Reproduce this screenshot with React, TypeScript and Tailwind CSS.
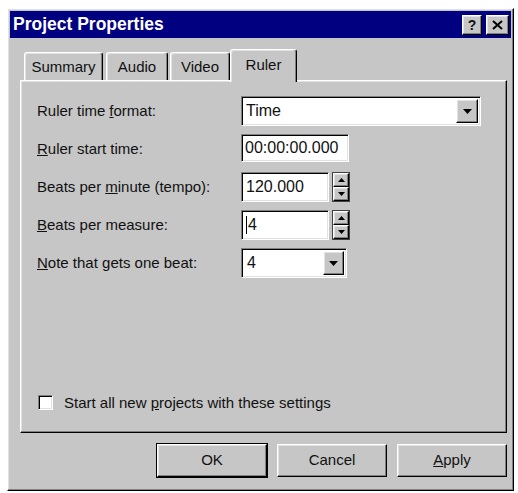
import React from "react";

const raised =
  "border border-t-white border-l-white border-r-black border-b-black shadow-[inset_-1px_-1px_#808080,inset_1px_1px_#e2e2e2]";
const sunken =
  "border border-t-[#808080] border-l-[#808080] border-r-white border-b-white shadow-[inset_1px_1px_#000,inset_-1px_-1px_#e2e2e2]";

function DownArrow() {
  return (
    <svg width="9" height="5" viewBox="0 0 9 5">
      <path d="M0 0h9L4.5 5z" fill="#000" />
    </svg>
  );
}

function DropButton({ w }: { w: string }) {
  return (
    <div className={`${raised} ${w} h-full flex items-center justify-center bg-[#c6c6c6]`}>
      <DownArrow />
    </div>
  );
}

function Spinner() {
  return (
    <div className="ml-[3px] flex h-[30px] w-[18px] flex-col border border-[#404040]">
      <div className={`${raised} flex flex-1 items-center justify-center bg-[#c6c6c6]`}>
        <svg width="7" height="4" viewBox="0 0 7 4">
          <path d="M0 4h7L3.5 0z" fill="#000" />
        </svg>
      </div>
      <div className={`${raised} flex flex-1 items-center justify-center bg-[#c6c6c6]`}>
        <svg width="7" height="4" viewBox="0 0 7 4">
          <path d="M0 0h7L3.5 4z" fill="#000" />
        </svg>
      </div>
    </div>
  );
}

function Tab({ label, active, w }: { label: string; active?: boolean; w: string }) {
  if (active) {
    return (
      <div
        className={`${w} relative z-10 -mx-[2px] -mb-[2px] flex h-[33px] items-start justify-center rounded-t-[3px] border border-b-0 border-t-white border-l-white border-r-black bg-[#c6c6c6] pt-[4px] shadow-[inset_-1px_0_#808080,inset_1px_1px_#e2e2e2]`}
      >
        {label}
      </div>
    );
  }
  return (
    <div
      className={`${w} flex h-[28px] items-center justify-center rounded-t-[3px] border border-b-0 border-t-white border-l-white border-r-black bg-[#c6c6c6] pt-[2px] shadow-[inset_-1px_0_#808080,inset_1px_1px_#e2e2e2]`}
    >
      {label}
    </div>
  );
}

function Button({ children, def }: { children: React.ReactNode; def?: boolean }) {
  return (
    <div
      className={`${def ? "outline outline-1 outline-black" : ""} ${raised} flex h-[33px] w-[110px] items-center justify-center bg-[#c6c6c6] text-[15px]`}
    >
      {children}
    </div>
  );
}

export default function App() {
  return (
    <div
      className="min-h-[493px] bg-white pl-[7px] pt-[8px] text-[#111]"
      style={{ fontFamily: '"Liberation Sans", Arial, sans-serif' }}
    >
      <div className={`${raised} flex h-[483px] w-[507px] flex-col bg-[#c6c6c6] p-[2px]`}>
        {/* Title bar */}
        <div className="flex h-[27px] items-center justify-between bg-[#000080] pl-[3px] pr-[2px]">
          <span className="text-[17.5px] font-bold text-white">Project Properties</span>
          <div className="flex gap-[4px]">
            <div className={`${raised} flex h-[20px] w-[20px] items-center justify-center bg-[#c6c6c6] text-[14px] font-bold leading-none`}>
              ?
            </div>
            <div className={`${raised} flex h-[20px] w-[23px] items-center justify-center bg-[#c6c6c6]`}>
              <svg width="11" height="10" viewBox="0 0 11 10">
                <path d="M1 1l9 8M10 1l-9 8" stroke="#000" strokeWidth="2" />
              </svg>
            </div>
          </div>
        </div>

        <div className="flex flex-1 flex-col pl-[10px] pr-[4px]">
          {/* Tabs */}
          <div className="mt-[11px] flex h-[31px] items-end pl-[4px] text-[15px]">
            <Tab label="Summary" w="w-[79px]" />
            <div className="w-[3px]" />
            <Tab label="Audio" w="w-[62px]" />
            <div className="w-[2px]" />
            <Tab label="Video" w="w-[60px]" />
            <div className="w-[2px]" />
            <Tab label="Ruler" active w="w-[67px]" />
          </div>

          {/* Panel */}
          <div className={`${raised} flex h-[353px] flex-col border-t-white px-[16px] pb-[18px] pt-[15px] text-[15px]`}>
            <div className="grid grid-cols-[204px_1fr] gap-y-[8px]">
              <div className="flex h-[30px] items-center">
                Ruler time <span className="ml-[4px] underline">f</span>ormat:
              </div>
              <div className={`${sunken} flex h-[30px] w-[240px] items-center bg-white pl-[4px] pr-[2px] text-[16px]`}>
                <span className="flex-1">Time</span>
                <div className="h-[24px]">
                  <DropButton w="w-[22px]" />
                </div>
              </div>

              <div className="flex h-[30px] items-center">
                <span className="underline">R</span>uler start time:
              </div>
              <div className={`${sunken} flex h-[28px] w-[108px] items-center bg-white pl-[3px] text-[16px]`}>
                00:00:00.000
              </div>

              <div className="flex h-[30px] items-center">
                Beats per <span className="ml-[4px] underline">m</span>inute (tempo):
              </div>
              <div className="flex h-[30px] items-center">
                <div className={`${sunken} flex h-[30px] w-[88px] items-center bg-white pl-[4px] text-[16px]`}>
                  120.000
                </div>
                <Spinner />
              </div>

              <div className="flex h-[30px] items-center">
                <span className="underline">B</span>eats per measure:
              </div>
              <div className="flex h-[30px] items-center">
                <div className={`${sunken} flex h-[30px] w-[88px] items-center bg-white pl-[4px] text-[16px]`}>
                  <span className="mr-[1px] h-[18px] w-[1px] bg-black" />4
                </div>
                <Spinner />
              </div>

              <div className="flex h-[30px] items-center">
                <span className="underline">N</span>ote that gets one beat:
              </div>
              <div className={`${sunken} flex h-[30px] w-[106px] items-center bg-white pl-[5px] pr-[2px] text-[16px]`}>
                <span className="flex-1">4</span>
                <div className="h-[24px]">
                  <DropButton w="w-[21px]" />
                </div>
              </div>
            </div>

            <div className="flex-1" />

            <div className="flex items-center gap-[11px] pl-[1px]">
              <div className={`${sunken} h-[15px] w-[15px] bg-white`} />
              <span>
                Start all new <span className="underline">p</span>rojects with these settings
              </span>
            </div>
          </div>

          {/* Buttons */}
          <div className="mt-[11px] flex justify-end gap-[10px]">
            <Button def>OK</Button>
            <Button>Cancel</Button>
            <Button>
              <span className="underline">A</span>pply
            </Button>
          </div>
        </div>
      </div>
    </div>
  );
}
